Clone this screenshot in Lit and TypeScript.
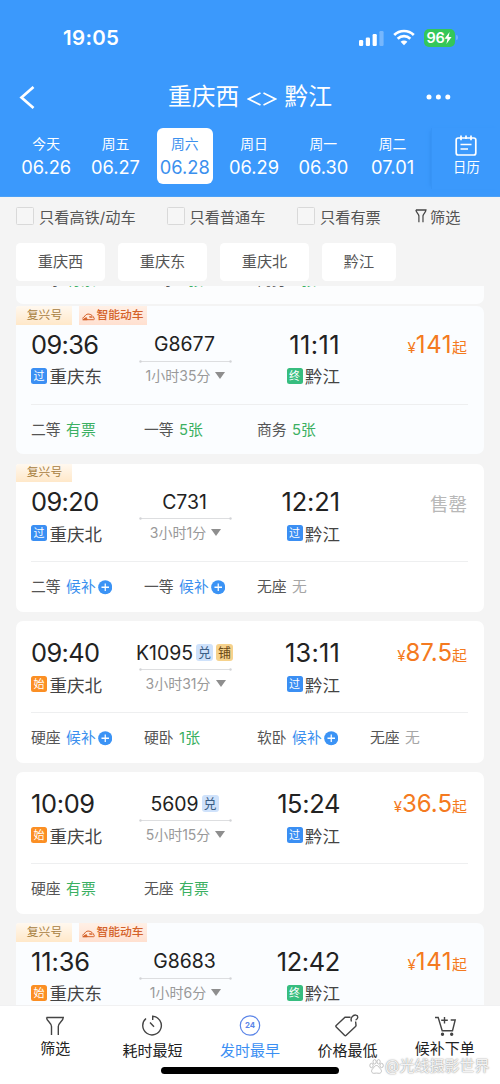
import { LitElement, html, css, svg, nothing } from 'lit';
import { customElement, property, state } from 'lit/decorators.js';

type Kind = 'pass' | 'start' | 'end';
interface Seat { name: string; value: string; state: 'ok' | 'wait' | 'none'; }
interface Train {
  no: string; marks?: string[]; tags?: string[]; tinted?: boolean;
  dep: string; depKind: Kind; from: string;
  arr: string; arrKind: Kind; to: string;
  duration: string; price?: string; seats: Seat[];
}

const KIND_LABEL: Record<Kind, string> = { pass: '过', start: '始', end: '终' };

const DAYS = [
  ['今天', '06.26'], ['周五', '06.27'], ['周六', '06.28'],
  ['周日', '06.29'], ['周一', '06.30'], ['周二', '07.01'],
];

const TRAINS: Train[] = [
  {
    no: 'G8677', tags: ['复兴号', '智能动车'], tinted: true,
    dep: '09:36', depKind: 'pass', from: '重庆东', arr: '11:11', arrKind: 'end', to: '黔江',
    duration: '1小时35分', price: '141',
    seats: [
      { name: '二等', value: '有票', state: 'ok' },
      { name: '一等', value: '5张', state: 'ok' },
      { name: '商务', value: '5张', state: 'ok' },
    ],
  },
  {
    no: 'C731', tags: ['复兴号'],
    dep: '09:20', depKind: 'pass', from: '重庆北', arr: '12:21', arrKind: 'pass', to: '黔江',
    duration: '3小时1分',
    seats: [
      { name: '二等', value: '候补', state: 'wait' },
      { name: '一等', value: '候补', state: 'wait' },
      { name: '无座', value: '无', state: 'none' },
    ],
  },
  {
    no: 'K1095', marks: ['兑', '铺'],
    dep: '09:40', depKind: 'start', from: '重庆北', arr: '13:11', arrKind: 'pass', to: '黔江',
    duration: '3小时31分', price: '87.5',
    seats: [
      { name: '硬座', value: '候补', state: 'wait' },
      { name: '硬卧', value: '1张', state: 'ok' },
      { name: '软卧', value: '候补', state: 'wait' },
      { name: '无座', value: '无', state: 'none' },
    ],
  },
  {
    no: '5609', marks: ['兑'],
    dep: '10:09', depKind: 'start', from: '重庆北', arr: '15:24', arrKind: 'pass', to: '黔江',
    duration: '5小时15分', price: '36.5',
    seats: [
      { name: '硬座', value: '有票', state: 'ok' },
      { name: '无座', value: '有票', state: 'ok' },
    ],
  },
  {
    no: 'G8683', tags: ['复兴号', '智能动车'], tinted: true,
    dep: '11:36', depKind: 'start', from: '重庆东', arr: '12:42', arrKind: 'end', to: '黔江',
    duration: '1小时6分', price: '141',
    seats: [],
  },
];

/* Evens out the narrow figure 1 in large numerals. */
const tracking = (s: string, base: number) =>
  `letter-spacing:${(base + 0.26 * (s.split('1').length - 1)).toFixed(2)}px`;

const seatStyles = css`
  .seats { display: grid; grid-template-columns: repeat(4, 113px); height: 49.5px; align-items: center; padding-top: 1px; box-sizing: border-box; }
  .seat { display: flex; align-items: center; gap: 5.5px; font-size: 14.8px; line-height: 22px; color: #555; white-space: nowrap; }
  .val { display: flex; align-items: center; gap: 2px; }
  .ok { color: #3bb062; }
  .wait { color: #3b8fee; }
  .none { color: #a6a6a6; }
  .plus { display: block; width: 14.5px; height: 14.5px; }
`;

const renderSeats = (seats: Seat[]) => html`
  <div class="seats">
    ${seats.map(s => html`
      <div class="seat"><span>${s.name}</span><span class="val ${s.state}">${s.value}${s.state === 'wait' ? html`
        <svg class="plus" viewBox="0 0 15 15"><circle cx="7.5" cy="7.5" r="7.3" fill="#3b93f5"/><path d="M7.5 3.6v7.8M3.6 7.5h7.8" stroke="#fff" stroke-width="1.3"/></svg>` : nothing}</span></div>`)}
  </div>`;

@customElement('train-card')
class TrainCard extends LitElement {
  @property({ attribute: false }) train!: Train;

  static styles = [seatStyles, css`
    :host { display: block; }
    .card { background: #fff; border-radius: 7px; padding: 0 16px 0 15px; overflow: hidden; }
    .tagged { border-top-left-radius: 3px; }
    .tinted { background: #fbfdff; }
    .tags { display: flex; gap: 7px; height: 18.5px; margin: 0 0 -12px -15px; }
    .tag { display: flex; align-items: center; justify-content: center; box-sizing: border-box; font-size: 11.8px; line-height: 17px; white-space: nowrap; }
    .fuxing { width: 56px; padding-left: 1px; color: #a8803f; background: linear-gradient(180deg, #fff8ef, #ffe8c9); }
    .smart { width: 68px; color: #d4622a; font-weight: 500; background: linear-gradient(180deg, #fff0e6, #ffe0d0); gap: 1px; }
    .smart svg { width: 13px; height: 8px; margin-top: 4px; }
    .main { display: grid; grid-template-columns: 100px 107px 102px 1fr; height: 92px; box-sizing: border-box; padding-top: 14px; border-bottom: 1px solid #eeeff0; }
    .time { font-size: 25.4px; line-height: 36px; color: #222; white-space: nowrap; }
    .station { display: flex; align-items: center; gap: 2.5px; height: 26.5px; font-size: 17.5px; color: #444; white-space: nowrap; }
    .kind { width: 16px; height: 16px; border-radius: 2.5px; color: #fff; font-size: 11px; line-height: 17px; text-align: center; overflow: hidden; }
    .pass { background: #3b8ff3; }
    .start { background: #fb8f24; }
    .end { background: #37bd7f; }
    .arrive .time { text-align: right; }
    .arrive .station { justify-content: flex-end; }
    .mid { display: flex; flex-direction: column; align-items: center; }
    .no { display: flex; align-items: center; box-sizing: border-box; height: 34px; padding-top: 1.5px; gap: 3px; font-size: 19.4px; color: #222; white-space: nowrap; }
    .mark { width: 17px; height: 17px; border-radius: 3px; font-size: 13px; line-height: 17px; text-align: center; background: #cfe2fb; color: #3c5f86; }
    .mark.sleeper { background: #f6d28c; color: #6a4a16; }
    .line { display: block; width: 93px; height: 3px; margin: -1px 0 0 2px; }
    .dur { display: flex; align-items: center; gap: 5px; height: 24px; margin-left: 2px; font-size: 14px; color: #999; white-space: nowrap; }
    .dur svg { width: 10px; height: 7px; margin-top: 1px; }
    .price { text-align: right; padding-right: 1px; color: #f47a20; font-size: 24px; line-height: 36px; white-space: nowrap; }
    .small { font-size: 15px; }
    .sold { color: #b8b8b8; font-size: 18.5px; line-height: 40px; }
  `];

  render() {
    const t = this.train;
    const kind = (k: Kind) => html`<span class="kind ${k}">${KIND_LABEL[k]}</span>`;
    return html`
      <div class="card ${t.tinted ? 'tinted' : ''} ${t.tags ? 'tagged' : ''}">
        ${t.tags ? html`<div class="tags">
          <span class="tag fuxing">${t.tags[0]}</span>
          ${t.tags[1] ? html`<span class="tag smart">
            <svg viewBox="0 0 13 8" fill="none" stroke="#d4622a" stroke-width="1"><path d="M.3 5.300C2.500 4.800 3 1 6 1c3 0 5.600 2.200 6.300 4.800.1.600-.2.900-.8.900H.8"/><path d="M.8 6.700 4.300 4.600 5.200 6.700Z" fill="#d4622a"/><path d="M7 3.300h2.600l1.200 1.500H7.600Z" fill="#d4622a" stroke="none"/></svg>${t.tags[1]}</span>` : nothing}
        </div>` : nothing}
        <div class="main">
          <div>
            <div class="time" style=${tracking(t.dep, -0.6)}>${t.dep}</div>
            <div class="station">${kind(t.depKind)}<span>${t.from}</span></div>
          </div>
          <div class="mid">
            <div class="no"><span>${t.no}</span>${(t.marks ?? []).map(m => html`<span class="mark ${m === '铺' ? 'sleeper' : ''}">${m}</span>`)}</div>
            <svg class="line" viewBox="0 0 93 3"><path d="M1 1.500h91" stroke="#dddee0"/><circle cx="1.500" cy="1.500" r="1.200" fill="#d3d4d7"/><circle cx="91.500" cy="1.500" r="1.200" fill="#d3d4d7"/></svg>
            <div class="dur">${t.duration}<svg viewBox="0 0 10 7"><path d="M0 0h10L5 7Z" fill="#8e8e8e"/></svg></div>
          </div>
          <div class="arrive">
            <div class="time" style=${tracking(t.arr, -0.6)}>${t.arr}</div>
            <div class="station">${kind(t.arrKind)}<span>${t.to}</span></div>
          </div>
          ${t.price
            ? html`<div class="price"><span class="small">¥</span><span style=${tracking(t.price, 0)}>${t.price}</span><span class="small">起</span></div>`
            : html`<div class="price sold">售罄</div>`}
        </div>
        ${renderSeats(t.seats)}
      </div>`;
  }
}

const funnel = svg`<path d="M1.500 1.500h16.800c0 3.400-5 5.200-5 9V19M1.500 1.500c0 3.400 5 5.200 5 9V19" />`;

@customElement('app-root')
class AppRoot extends LitElement {
  @state() private selected = 2;

  static styles = [seatStyles, css`
    :host { display: block; width: 500px; height: 1084px; overflow: hidden; position: relative; font-family: Inter, "Noto Sans CJK SC", sans-serif; background: #f4f4f4; }
    .page { display: flex; flex-direction: column; height: 1084px; }
    .head { height: 197.300px; flex: none; background: #3b99fc; color: #fff; display: flex; flex-direction: column; box-sizing: border-box; border-bottom: 1px solid #4ba1f7; }
    .status { height: 75px; display: flex; align-items: center; padding: 0 42px 0 63px; box-sizing: border-box; }
    .clock { flex: 1; font-size: 20.500px; font-weight: 600; letter-spacing: 0.3px; }
    .signal { width: 25px; height: 16px; margin-right: 9px; }
    .wifi { width: 22px; height: 17px; margin-right: 9.500px; }
    .battery { display: flex; align-items: center; justify-content: center; width: 31px; height: 18px; border-radius: 5px; background: #34c759; font-size: 14.500px; font-weight: 600; letter-spacing: -0.3px; }
    .battery svg { width: 8px; height: 12px; }
    .nub { width: 2px; height: 5px; margin-left: 1px; border-radius: 0 2px 2px 0; background: #6cb3fd; }
    .titlebar { height: 44px; display: grid; grid-template-columns: 60px 1fr 60px; align-items: center; }
    .back { width: 16px; height: 23px; margin-left: 18.500px; }
    .title { text-align: center; font-size: 23.800px; line-height: 44px; white-space: nowrap; }
    .arrows { display: inline-block; width: 30px; height: 14px; margin: 0 7px 0 8px; vertical-align: -0.5px; }
    .more { width: 26px; height: 6px; margin-left: -15px; }
    .days { flex: 1; display: flex; padding: 8.500px 0 0 11.500px; }
    .day { width: 69.300px; display: flex; justify-content: center; }
    .pill { width: 56px; height: 56px; border-radius: 6px; box-sizing: border-box; padding-top: 6px; display: flex; flex-direction: column; align-items: center; }
    .week { font-size: 13.800px; line-height: 20px; }
    .date { font-size: 18.300px; line-height: 27px; }
    .on { background: #fff; color: #3b90ee; }
    .cal { flex: 1; height: 61px; margin-left: 3.500px; border-left: 1px solid #3794f6; display: flex; flex-direction: column; align-items: center; box-sizing: border-box; padding: 7px 0 0 1px; font-size: 13.300px; line-height: 19px; box-shadow: -3px 0 4px -3px #2f8aea; }
    .cal svg { width: 22px; height: 21px; margin-bottom: 2px; }
    .filters { height: 39px; flex: none; display: flex; align-items: center; box-sizing: border-box; padding: 0 0 1px 16px; font-size: 15.200px; color: #555; white-space: nowrap; }
    .opt { display: flex; align-items: center; gap: 5px; }
    .box { width: 18px; height: 18px; box-sizing: border-box; border: 1px solid #d9d9d9; border-radius: 1.500px; background: #f6f6f6; }
    .o1 { width: 150.500px; } .o2 { width: 130.500px; } .o3 { width: 117.500px; }
    .filters svg { width: 12px; height: 14px; margin-right: 3.500px; }
    .chips { height: 50.200px; flex: none; display: flex; gap: 13px; padding: 6.500px 0 0 16px; box-sizing: border-box; }
    .chip { width: 89px; height: 38px; border-radius: 4.500px; background: #fff; color: #555; font-size: 15.200px; line-height: 38px; text-align: center; }
    .chip:last-child { width: 74px; }
    .list { flex: 1; min-height: 0; overflow: hidden; padding: 0 16px; display: flex; flex-direction: column; }
    .peek { flex: none; height: 18px; margin-bottom: 1.700px; background: #fcfdfe; border-radius: 0 0 7px 7px; overflow: hidden; display: flex; flex-direction: column; justify-content: flex-end; padding-left: 15px; }
    .peek .seats { flex: none; }
    train-card { flex: none; margin-bottom: 9.500px; }
    .nav { height: 79px; flex: none; background: #fff; display: flex; box-sizing: border-box; border-top: 1px solid #f1f1f2; padding: 8px 6.500px 0; }
    .item { flex: 1; display: flex; flex-direction: column; align-items: center; font-size: 15px; line-height: 20px; color: #222; white-space: nowrap; }
    .item svg { width: 26px; height: 24px; fill: none; stroke: #444; stroke-width: 1.400; margin-bottom: 1px; }
    .item.low svg { margin-bottom: 2.500px; }
    .item.active { color: #3b8ff3; }
    .item.active svg { stroke: #5b85e8; }
    .badge24 { font: 700 7.800px Inter, sans-serif; fill: #5b85e8; stroke: none; }
    .home { position: absolute; left: 161px; top: 1067px; width: 178px; height: 7px; border-radius: 4px; background: #000; }
    .mark { position: absolute; left: 369px; top: 1055px; display: flex; align-items: center; gap: 1px; font-size: 15px; line-height: 22px; color: rgba(255,255,255,.9); white-space: nowrap; text-shadow: 0 0 1px #999, 0 0 2px #aaa; }
    .mark svg { width: 15px; height: 15px; }
  `];

  render() {
    return html`
      <div class="page">
        <div class="head">
          <div class="status">
            <span class="clock">19:05</span>
            <svg class="signal" viewBox="0 0 25 16" fill="#fff"><rect x="0" y="10" width="4.200" height="6" rx="1.200"/><rect x="6.800" y="7.500" width="4.200" height="8.500" rx="1.200"/><rect x="13.600" y="4" width="4.200" height="12" rx="1.200"/><rect x="20.400" y="1" width="4.200" height="15" rx="1.200" opacity=".3"/></svg>
            <svg class="wifi" viewBox="0 0 22 17" fill="none" stroke="#fff" stroke-width="2.700"><path d="M1.200 6a14 14 0 0 1 19.600 0"/><path d="M4.700 9.700a9 9 0 0 1 12.600 0"/><path d="M11 16.200 7.600 12.800a4.900 4.900 0 0 1 6.800 0Z" fill="#fff" stroke="none"/></svg>
            <span class="battery">96<svg viewBox="0 0 8 12"><path d="M5.600 0 .5 6.800h3L2.400 12l5.200-6.900h-3Z" fill="#fff"/></svg></span><span class="nub"></span>
          </div>
          <div class="titlebar">
            <svg class="back" viewBox="0 0 16 23" fill="none" stroke="#fff" stroke-width="2.700"><path d="M14.500 1 2.500 11.500 14.500 22"/></svg>
            <div class="title">重庆西<svg class="arrows" viewBox="0 0 30 14" fill="none" stroke="#fff" stroke-width="1.600"><path d="M13.500 1 1.500 7l12 6M16.500 1l12 6-12 6"/></svg>黔江</div>
            <svg class="more" viewBox="0 0 26 6" fill="#fff"><circle cx="4" cy="3" r="2.500"/><circle cx="13.400" cy="3" r="2.500"/><circle cx="22.800" cy="3" r="2.500"/></svg>
          </div>
          <div class="days">
            ${DAYS.map((d, i) => html`<div class="day" @click=${() => { this.selected = i; }}>
              <div class="pill ${i === this.selected ? 'on' : ''}"><span class="week">${d[0]}</span><span class="date">${d[1]}</span></div></div>`)}
            <div class="cal"><svg viewBox="0 0 22 21" fill="none" stroke="#fff" stroke-width="1.700"><rect x="1.200" y="3" width="19.600" height="17" rx="2"/><path d="M6 .5v4.700M11 .5v3.500M16 .5v4.700M5.500 9.500h11M5.500 14h7.500"/></svg>日历</div>
          </div>
        </div>
        <div class="filters">
          <div class="opt o1"><span class="box"></span>只看高铁/动车</div>
          <div class="opt o2"><span class="box"></span>只看普通车</div>
          <div class="opt o3"><span class="box"></span>只看有票</div>
          <svg viewBox="0 0 20 20" preserveAspectRatio="none" fill="none" stroke="#444" stroke-width="2">${funnel}</svg>筛选
        </div>
        <div class="chips">${['重庆西', '重庆东', '重庆北', '黔江'].map(c => html`<div class="chip">${c}</div>`)}</div>
        <div class="list">
          <div class="peek">${renderSeats(TRAINS[0].seats)}</div>
          ${TRAINS.map(t => html`<train-card .train=${t}></train-card>`)}
        </div>
        <div class="nav">
          <div class="item"><svg viewBox="-3 -2 26 24">${funnel}</svg>筛选</div>
          <div class="item low"><svg viewBox="0 0 26 24"><path d="M12.700 6V2.300A9.300 9.300 0 1 1 6 4.500M10 8.500l4 4.200"/></svg>耗时最短</div>
          <div class="item low active"><svg viewBox="0 0 26 24"><circle cx="13" cy="11.500" r="9.700" stroke-width="1.200"/><text class="badge24" x="13" y="14.300" text-anchor="middle">24</text></svg>发时最早</div>
          <div class="item low"><svg viewBox="0 0 26 24"><path d="M17.500 7.500C16 4 19 .8 21.800 1.100c2.800.4 2.600 3.900-.2 5M16.500 3.200h-5.500L2.200 11.400c-.5.5-.5 1 0 1.500l8.300 8.400c.5.500 1.200.5 1.700 0l9.300-8.800c.4-.4.6-.9.5-1.400l-.4-3.600"/></svg>价格最低</div>
          <div class="item"><svg viewBox="0 0 26 24"><path d="M3 3.500h3.200l4 13.200h10.300L23.200 6h-4.500M12.500 3v6.500M9.200 6.200h6.600"/><circle cx="10.500" cy="20.300" r="1" fill="#444"/><circle cx="19.700" cy="20.300" r="1" fill="#444"/></svg>候补下单</div>
        </div>
      </div>
      <div class="home"></div>
      <div class="mark"><svg viewBox="0 0 15 15" fill="#fff" stroke="#aaa" stroke-width=".7"><ellipse cx="2.500" cy="6.500" rx="1.700" ry="2.200"/><ellipse cx="5.600" cy="2.800" rx="1.600" ry="2.200"/><ellipse cx="9.600" cy="2.800" rx="1.600" ry="2.200"/><ellipse cx="12.600" cy="6.500" rx="1.700" ry="2.200"/><path d="M7.500 6.500c2 0 2.500 2 4 3.500 2 2.200.5 4.500-1.500 4.300-1.500-.3-3.500-.3-5 0-2 .2-3.500-2.100-1.500-4.300 1.500-1.500 2-3.500 4-3.500Z"/></svg>@光线摄影世界</div>`;
  }
}
